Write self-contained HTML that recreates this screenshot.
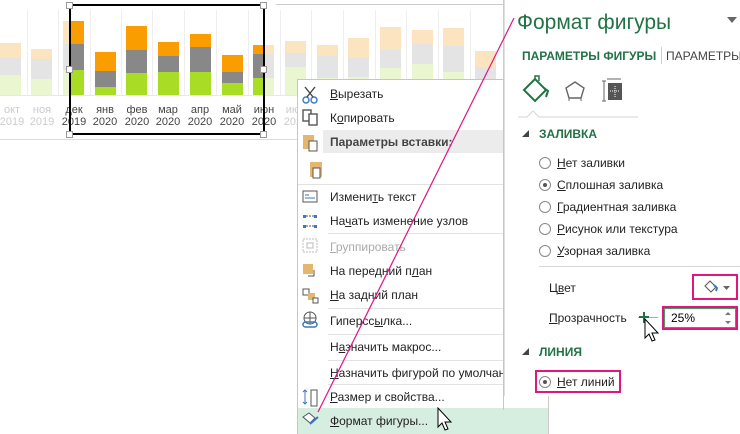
<!DOCTYPE html>
<html><head><meta charset="utf-8"><style>
*{margin:0;padding:0;box-sizing:border-box}
body{width:740px;height:434px;overflow:hidden;background:#fff;position:relative;font-family:"Liberation Sans","DejaVu Sans",sans-serif;}
.a{position:absolute}
.b{position:absolute}
.lbl{position:absolute;font-size:11px;text-align:center;width:32px;line-height:12px}
.mi{position:absolute;left:330px;font-size:12px;color:#222;white-space:nowrap}
.sep{position:absolute;left:328px;width:175px;height:1px;background:#e2e2e2}
.rad{position:absolute;left:539px;width:12px;height:12px;border:1px solid #888;border-radius:50%;background:#fff}
.rt{position:absolute;left:557px;font-size:12px;color:#222}
.pink{position:absolute;border:2px solid #e0157f}
u{text-decoration:underline}
</style></head><body>
<!-- chart gridlines -->
<div class="a" style="left:27px;top:10px;width:1px;height:85px;background:#eee"></div>
<div class="a" style="left:58px;top:10px;width:1px;height:85px;background:#eee"></div>
<div class="a" style="left:90px;top:10px;width:1px;height:85px;background:#eee"></div>
<div class="a" style="left:121px;top:10px;width:1px;height:85px;background:#eee"></div>
<div class="a" style="left:152px;top:10px;width:1px;height:85px;background:#eee"></div>
<div class="a" style="left:184px;top:10px;width:1px;height:85px;background:#eee"></div>
<div class="a" style="left:216px;top:10px;width:1px;height:85px;background:#eee"></div>
<div class="a" style="left:248px;top:10px;width:1px;height:85px;background:#eee"></div>
<div class="a" style="left:280px;top:10px;width:1px;height:85px;background:#eee"></div>
<div class="a" style="left:311px;top:10px;width:1px;height:85px;background:#eee"></div>
<div class="a" style="left:343px;top:10px;width:1px;height:85px;background:#eee"></div>
<div class="a" style="left:375px;top:10px;width:1px;height:85px;background:#eee"></div>
<div class="a" style="left:406px;top:10px;width:1px;height:85px;background:#eee"></div>
<div class="a" style="left:438px;top:10px;width:1px;height:85px;background:#eee"></div>
<div class="a" style="left:470px;top:10px;width:1px;height:85px;background:#eee"></div>
<div class="a" style="left:0;top:95px;width:503px;height:1px;background:#e8e8e8"></div>
<!-- faded bars -->
<div class="b" style="left:0;top:43px;width:21px;height:15px;background:#fde4c0"></div><div class="b" style="left:0;top:58px;width:21px;height:17px;background:#e4e4e4"></div><div class="b" style="left:0;top:75px;width:21px;height:20px;background:#eaf6d0"></div>
<div class="b" style="left:31px;top:49px;width:21px;height:10px;background:#fde4c0"></div><div class="b" style="left:31px;top:59px;width:21px;height:20px;background:#e4e4e4"></div><div class="b" style="left:31px;top:79px;width:21px;height:16px;background:#eaf6d0"></div>
<div class="b" style="left:63px;top:21px;width:21px;height:23px;background:#fde4c0"></div><div class="b" style="left:63px;top:44px;width:21px;height:26px;background:#e4e4e4"></div><div class="b" style="left:63px;top:70px;width:21px;height:25px;background:#eaf6d0"></div>
<div class="b" style="left:253px;top:45px;width:21px;height:9px;background:#fde4c0"></div><div class="b" style="left:253px;top:54px;width:21px;height:24px;background:#e4e4e4"></div><div class="b" style="left:253px;top:78px;width:21px;height:17px;background:#eaf6d0"></div>
<div class="b" style="left:285px;top:41px;width:21px;height:12px;background:#fde4c0"></div><div class="b" style="left:285px;top:53px;width:21px;height:14px;background:#e4e4e4"></div><div class="b" style="left:285px;top:67px;width:21px;height:28px;background:#eaf6d0"></div>
<div class="b" style="left:317px;top:45px;width:21px;height:11px;background:#fde4c0"></div><div class="b" style="left:317px;top:56px;width:21px;height:22px;background:#e4e4e4"></div><div class="b" style="left:317px;top:78px;width:21px;height:17px;background:#eaf6d0"></div>
<div class="b" style="left:348px;top:38px;width:21px;height:20px;background:#fde4c0"></div><div class="b" style="left:348px;top:58px;width:21px;height:19px;background:#e4e4e4"></div><div class="b" style="left:348px;top:77px;width:21px;height:18px;background:#eaf6d0"></div>
<div class="b" style="left:380px;top:27px;width:21px;height:23px;background:#fde4c0"></div><div class="b" style="left:380px;top:50px;width:21px;height:18px;background:#e4e4e4"></div><div class="b" style="left:380px;top:68px;width:21px;height:27px;background:#eaf6d0"></div>
<div class="b" style="left:412px;top:30px;width:21px;height:14px;background:#fde4c0"></div><div class="b" style="left:412px;top:44px;width:21px;height:20px;background:#e4e4e4"></div><div class="b" style="left:412px;top:64px;width:21px;height:31px;background:#eaf6d0"></div>
<div class="b" style="left:443px;top:28px;width:21px;height:18px;background:#fde4c0"></div><div class="b" style="left:443px;top:46px;width:21px;height:26px;background:#e4e4e4"></div><div class="b" style="left:443px;top:72px;width:21px;height:23px;background:#eaf6d0"></div>
<div class="b" style="left:475px;top:51px;width:21px;height:16px;background:#fde4c0"></div><div class="b" style="left:475px;top:67px;width:21px;height:13px;background:#e4e4e4"></div><div class="b" style="left:475px;top:80px;width:21px;height:15px;background:#eaf6d0"></div>
<!-- solid bars -->
<div class="b" style="left:70px;top:21px;width:14px;height:23px;background:#f99d00"></div><div class="b" style="left:70px;top:44px;width:14px;height:26px;background:#888"></div><div class="b" style="left:70px;top:70px;width:14px;height:25px;background:#a9dc25"></div>
<div class="b" style="left:95px;top:52px;width:21px;height:19px;background:#f99d00"></div><div class="b" style="left:95px;top:71px;width:21px;height:16px;background:#888"></div><div class="b" style="left:95px;top:87px;width:21px;height:8px;background:#a9dc25"></div>
<div class="b" style="left:126px;top:26px;width:21px;height:24px;background:#f99d00"></div><div class="b" style="left:126px;top:50px;width:21px;height:23px;background:#888"></div><div class="b" style="left:126px;top:73px;width:21px;height:22px;background:#a9dc25"></div>
<div class="b" style="left:158px;top:42px;width:21px;height:14px;background:#f99d00"></div><div class="b" style="left:158px;top:56px;width:21px;height:16px;background:#888"></div><div class="b" style="left:158px;top:72px;width:21px;height:23px;background:#a9dc25"></div>
<div class="b" style="left:190px;top:34px;width:21px;height:13px;background:#f99d00"></div><div class="b" style="left:190px;top:47px;width:21px;height:25px;background:#888"></div><div class="b" style="left:190px;top:72px;width:21px;height:23px;background:#a9dc25"></div>
<div class="b" style="left:222px;top:55px;width:21px;height:17px;background:#f99d00"></div><div class="b" style="left:222px;top:72px;width:21px;height:11px;background:#888"></div><div class="b" style="left:222px;top:83px;width:21px;height:12px;background:#a9dc25"></div>
<div class="b" style="left:253px;top:45px;width:11px;height:9px;background:#f99d00"></div><div class="b" style="left:253px;top:54px;width:11px;height:24px;background:#888"></div><div class="b" style="left:253px;top:78px;width:11px;height:17px;background:#a9dc25"></div>
<!-- labels -->
<div class="lbl" style="left:-4px;top:104px;color:#ccc">окт<br>2019</div>
<div class="lbl" style="left:26px;top:104px;color:#ccc">ноя<br>2019</div>
<div class="lbl" style="left:58px;top:104px;color:#444">дек<br>2019</div>
<div class="lbl" style="left:89px;top:104px;color:#444">янв<br>2020</div>
<div class="lbl" style="left:121px;top:104px;color:#444">фев<br>2020</div>
<div class="lbl" style="left:152px;top:104px;color:#444">мар<br>2020</div>
<div class="lbl" style="left:184px;top:104px;color:#444">апр<br>2020</div>
<div class="lbl" style="left:216px;top:104px;color:#444">май<br>2020</div>
<div class="lbl" style="left:248px;top:104px;color:#444">июн<br>2020</div>
<div class="lbl" style="left:280px;top:104px;color:#ccc">июл<br>2020</div>
<div class="a" style="left:0;top:139px;width:298px;height:1px;background:#ddd"></div>
<div class="a" style="left:503px;top:0;width:1px;height:140px;background:#ccc"></div>
<div class="a" style="left:276px;top:4px;width:228px;height:1px;background:#ccc"></div>
<!-- selection -->
<div class="a" style="left:69px;top:4px;width:196px;height:131px;border:2px solid #000"></div>
<div class="a" style="left:66px;top:2px;width:7px;height:7px;border:1px solid #999;background:#fff"></div>
<div class="a" style="left:260px;top:2px;width:7px;height:7px;border:1px solid #999;background:#fff"></div>
<div class="a" style="left:66px;top:66px;width:7px;height:7px;border:1px solid #999;background:#fff"></div>
<div class="a" style="left:260px;top:66px;width:7px;height:7px;border:1px solid #999;background:#fff"></div>
<div class="a" style="left:66px;top:131px;width:7px;height:7px;border:1px solid #999;background:#fff"></div>
<div class="a" style="left:260px;top:131px;width:7px;height:7px;border:1px solid #999;background:#fff"></div>
<!-- context menu -->
<div class="a" style="left:297px;top:79px;width:207px;height:355px;background:#fff;border:1px solid #c6c6c6"></div>
<div class="a" style="left:323px;top:130px;width:180px;height:23px;background:#ececec"></div>
<div class="a" style="left:298px;top:408px;width:250px;height:26px;background:#d5eedf"></div>
<div class="a" style="left:548px;top:396px;width:1px;height:38px;background:#ccc"></div>
<svg class="a" style="left:300px;top:84px" width="22" height="350" viewBox="0 0 22 350">
<g fill="none" stroke-width="1.4">
<circle cx="6" cy="16" r="3" stroke="#3b77c5"/><circle cx="14" cy="16" r="3" stroke="#3b77c5"/><path d="M7 13L15 3M13 13L5 3" stroke="#444"/>
<rect x="3" y="26" width="8" height="11" stroke="#555"/><rect x="9" y="30" width="8" height="11" fill="#fff" stroke="#555"/>
</g>
<rect x="3" y="51" width="11" height="14" fill="#e5b66e"/><rect x="9" y="57" width="8" height="10" fill="#fff" stroke="#555"/>
<rect x="18" y="78" width="12" height="15" fill="#e5b66e" transform="translate(-8,0)"/><rect x="16" y="84" width="7" height="10" fill="#fff" stroke="#555" transform="translate(-3,0)"/>
<rect x="3" y="107" width="14" height="11" fill="none" stroke="#555"/><path d="M5 111h4M5 114h10" stroke="#3b77c5"/>
<g fill="#3b77c5"><rect x="3" y="131" width="3" height="3"/><rect x="14" y="131" width="3" height="3"/><rect x="3" y="141" width="3" height="3"/><rect x="14" y="141" width="3" height="3"/></g><path d="M6 132h8M6 142h8" stroke="#555" stroke-dasharray="2 1"/>
<rect x="3" y="155" width="14" height="13" fill="none" stroke="#bbb" stroke-dasharray="2 1"/><rect x="7" y="159" width="6" height="5" fill="none" stroke="#bbb"/>
<rect x="3" y="180" width="10" height="10" fill="#e5b66e"/><path d="M14 186v6h-6" stroke="#555" fill="none"/>
<rect x="3" y="205" width="6" height="6" fill="none" stroke="#555"/><rect x="8" y="209" width="7" height="7" fill="#e5b66e"/><rect x="13" y="214" width="5" height="5" fill="#fff" stroke="#555"/>
<circle cx="10" cy="234" r="6" fill="none" stroke="#555"/><path d="M4 234h12M10 228v12" stroke="#555"/><rect x="3" y="238" width="14" height="5" rx="2.5" fill="none" stroke="#3b77c5" stroke-width="1.5"/>
<path d="M5 306v14M3 308l2-2 2 2M3 318l2 2 2-2" stroke="#3b77c5" fill="none"/><rect x="11" y="306" width="6" height="16" fill="none" stroke="#555"/>
<path d="M3 333l6-4 6 5-5 5z" fill="#fff" stroke="#555"/><path d="M10 340l8-7" stroke="#3b77c5" stroke-width="2"/>
</svg>
<div class="mi" style="top:87px"><u>В</u>ырезать</div>
<div class="mi" style="top:111px">К<u>о</u>пировать</div>
<div class="mi" style="top:135px;font-weight:bold;color:#444">Параметры вставки:</div>
<div class="a" style="left:298px;top:184px;width:205px;height:1px;background:#e2e2e2"></div>
<div class="mi" style="top:190px">Измени<u>т</u>ь текст</div>
<div class="mi" style="top:214px">На<u>ч</u>ать изменение узлов</div>
<div class="sep" style="top:233px"></div>
<div class="mi" style="top:240px;color:#aaa"><u>Г</u>руппировать</div>
<div class="mi" style="top:264px">На передний п<u>л</u>ан</div>
<div class="mi" style="top:288px"><u>Н</u>а задний план</div>
<div class="sep" style="top:308px"></div>
<div class="mi" style="top:314px">Гиперсс<u>ы</u>лка...</div>
<div class="sep" style="top:334px"></div>
<div class="mi" style="top:340px">Н<u>а</u>значить макрос...</div>
<div class="sep" style="top:360px"></div>
<div class="mi" style="top:366px"><u>Н</u>азначить фигурой по умолчанию</div>
<div class="a" style="left:503px;top:360px;width:1px;height:50px;background:#c6c6c6"></div>
<div class="sep" style="top:384px"></div>
<div class="mi" style="top:390px"><u>Р</u>азмер и свойства...</div>
<div class="mi" style="top:414px"><u>Ф</u>ормат фигуры...</div>
<!-- panel -->
<div class="a" style="left:504px;top:0;width:236px;height:396px;background:#fff"></div>
<div class="a" style="left:504px;top:0;width:1px;height:396px;background:#e0e0e0"></div>
<div class="a" style="left:517px;top:11px;font-size:21px;color:#217346">Формат фигуры</div>
<svg class="a" style="left:727px;top:17px" width="10" height="6"><path d="M0 0h10L5 6z" fill="#666"/></svg>
<div class="a" style="left:522px;top:49px;font-size:12px;font-weight:bold;color:#217346">ПАРАМЕТРЫ ФИГУРЫ</div>
<div class="a" style="left:661px;top:47px;width:1px;height:17px;background:#ccc"></div>
<div class="a" style="left:666px;top:49px;font-size:12px;color:#444">ПАРАМЕТРЫ</div>
<svg class="a" style="left:518px;top:74px" width="120" height="46">
<path d="M6 16l11-11 11 11-11 11z" fill="none" stroke="#217346" stroke-width="2"/><path d="M17 5v-3h4v5" fill="none" stroke="#217346" stroke-width="1.5"/><path d="M26 14l4 3-2 6" fill="none" stroke="#217346" stroke-width="2"/>
<path d="M57 8l9 6-3 10h-12l-3-10z" fill="none" stroke="#666" stroke-width="1.4"/><path d="M51 24v3M63 24v3" stroke="#666"/>
<path d="M86 7v20M84 7h4M84 27h4M89 5h14" stroke="#666"/><rect x="90" y="9" width="14" height="17" fill="#555"/><path d="M97 12v11M92 17h10" stroke="#fff" stroke-dasharray="1 1"/>
<path d="M-1 43h10l6-6 6 6h100" fill="none" stroke="#d6d6d6"/>
</svg>
<svg class="a" style="left:522px;top:130px" width="8" height="8"><path d="M0 7h7V0z" fill="#444"/></svg>
<div class="a" style="left:539px;top:127px;font-size:12px;font-weight:bold;color:#217346">ЗАЛИВКА</div>
<div class="rad" style="top:157px"></div><div class="rt" style="top:156px"><u>Н</u>ет заливки</div>
<div class="rad" style="top:179px"></div><div class="a" style="left:543px;top:183px;width:4px;height:4px;border-radius:50%;background:#555"></div><div class="rt" style="top:178px"><u>С</u>плошная заливка</div>
<div class="rad" style="top:201px"></div><div class="rt" style="top:200px"><u>Г</u>радиентная заливка</div>
<div class="rad" style="top:223px"></div><div class="rt" style="top:222px"><u>Р</u>исунок или текстура</div>
<div class="rad" style="top:245px"></div><div class="rt" style="top:244px"><u>У</u>зорная заливка</div>
<div class="a" style="left:539px;top:266px;width:201px;height:1px;background:#d6d6d6"></div>
<div class="a" style="left:549px;top:281px;font-size:12px;color:#222">Ц<u>в</u>ет</div>
<div class="pink" style="left:692px;top:274px;width:46px;height:26px"></div>
<svg class="a" style="left:703px;top:279px" width="30" height="16"><path d="M2 7l5-5 6 6-5 5z" fill="#fff" stroke="#555"/><path d="M11 6l3 3-1 3" stroke="#3b77c5" stroke-width="2" fill="none"/><path d="M20 7h7l-3.5 4z" fill="#666"/></svg>
<div class="a" style="left:549px;top:311px;font-size:12px;color:#222"><u>П</u>розрачность</div>
<div class="a" style="left:638px;top:317px;width:20px;height:1px;background:#aaa"></div>
<div class="a" style="left:643px;top:312px;width:2px;height:11px;background:#217346"></div>
<div class="a" style="left:639px;top:316px;width:10px;height:2px;background:#217346"></div>
<div class="pink" style="left:662px;top:306px;width:76px;height:24px"></div>
<div class="a" style="left:664px;top:308px;width:72px;height:20px;border:1px solid #4a9a6a"></div>
<div class="a" style="left:671px;top:311px;font-size:12px;color:#000">25%</div>
<svg class="a" style="left:724px;top:310px" width="8" height="16"><path d="M1 5l3-3 3 3zM1 11l3 3 3-3z" fill="#777"/></svg>
<svg class="a" style="left:522px;top:348px" width="8" height="8"><path d="M0 7h7V0z" fill="#444"/></svg>
<div class="a" style="left:539px;top:345px;font-size:12px;font-weight:bold;color:#217346">ЛИНИЯ</div>
<div class="pink" style="left:535px;top:370px;width:86px;height:23px"></div>
<div class="rad" style="top:376px"></div><div class="a" style="left:543px;top:380px;width:4px;height:4px;border-radius:50%;background:#555"></div>
<div class="rt" style="top:375px"><u>Н</u>ет линий</div>
<!-- pink line -->
<svg class="a" style="left:0;top:0" width="740" height="434"><line x1="318" y1="412" x2="514" y2="18" stroke="#e0157f" stroke-width="1.2"/></svg>
<!-- cursors -->
<svg class="a" style="left:437px;top:407px" width="16" height="26"><path d="M1 1v19l4-4 3 7 3-1-3-7h6z" fill="#fff" stroke="#000"/></svg>
<svg class="a" style="left:644px;top:318px" width="16" height="26"><path d="M1 1v19l4-4 3 7 3-1-3-7h6z" fill="#fff" stroke="#000"/></svg>
</body></html>
